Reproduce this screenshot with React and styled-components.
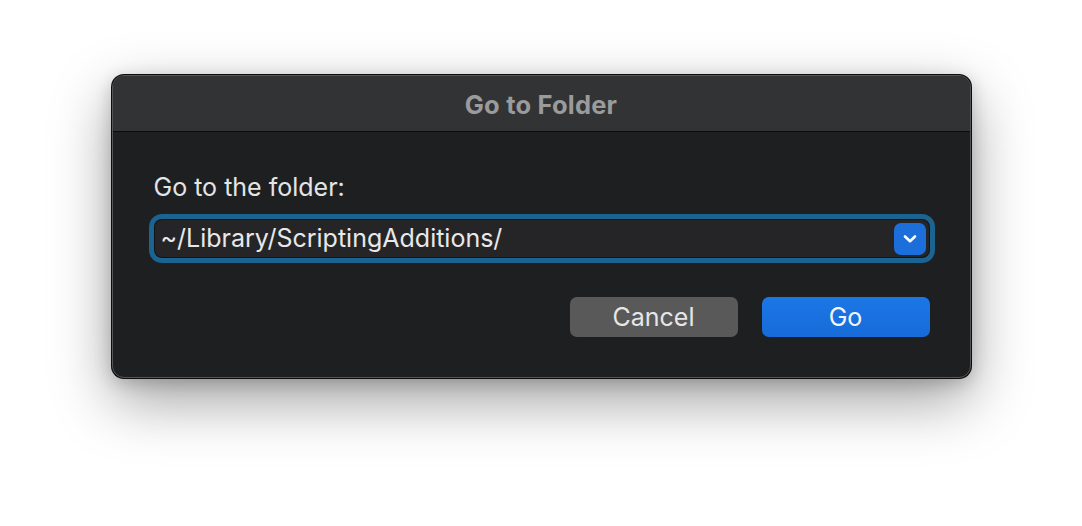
import React from "react";
import styled, { createGlobalStyle } from "styled-components";

const Global = createGlobalStyle`
  html, body { margin: 0; padding: 0; background: #ffffff; }
  body { font-family: Inter, "Noto Sans", "Liberation Sans", sans-serif; }
  * { box-sizing: border-box; }
`;

const Stage = styled.div`
  width: 1082px;
  height: 526px;
  display: flex;
  justify-content: center;
  align-items: flex-start;
  padding-top: 75px;
`;

const Window = styled.div`
  width: 859px;
  height: 303px;
  border-radius: 12px;
  background: #1e1f21;
  border: 1px solid #555658;
  box-shadow: 0 0 0 1px #0c0c0c, 0 22px 60px rgba(0, 0, 0, 0.38), 0 4px 18px rgba(0, 0, 0, 0.2);
  overflow: hidden;
  display: flex;
  flex-direction: column;
`;

const TitleBar = styled.div`
  height: 56px;
  flex: none;
  background: #323335;
  border-bottom: 1px solid #0b0b0c;
  display: flex;
  align-items: center;
  justify-content: center;
  color: #9b9b9c;
  font-weight: 700;
  font-size: 25.5px;
  letter-spacing: 0.2px;
  padding-top: 1px;
`;

const Body = styled.div`
  flex: 1;
  display: flex;
  flex-direction: column;
  padding: 40px 40px 0 41px;
`;

const Label = styled.div`
  color: #e4e4e5;
  font-size: 25px;
  line-height: 30px;
`;

const Field = styled.div`
  margin-top: 18px;
  height: 37px;
  border-radius: 7px;
  background: #252527;
  box-shadow: 0 0 0 1px #141416, 0 0 0 6px #1b6391;
  display: flex;
  align-items: center;
  padding: 0 3px 0 6px;
  margin-left: 1px;
  margin-right: 1px;
`;

const FieldText = styled.div`
  flex: 1;
  color: #e8e8e9;
  font-size: 25px;
  line-height: 37px;
  white-space: nowrap;
`;

const DropButton = styled.div`
  width: 32px;
  height: 32px;
  border-radius: 7px;
  background: #1c6fdb;
  display: flex;
  align-items: center;
  justify-content: center;
`;

const Buttons = styled.div`
  margin-top: 40px;
  display: flex;
  justify-content: flex-end;
  gap: 24px;
`;

const Button = styled.div`
  width: 168px;
  height: 40px;
  border-radius: 7px;
  display: flex;
  align-items: center;
  justify-content: center;
  font-size: 25px;
  color: ${(p) => (p.$primary ? "#f2f4f8" : "#e6e6e6")};
  background: ${(p) =>
    p.$primary ? "linear-gradient(#1b77e6, #176bd8)" : "#59595a"};
`;

export default function App() {
  return (
    <>
      <Global />
      <Stage>
        <Window>
          <TitleBar>Go to Folder</TitleBar>
          <Body>
            <Label>Go to the folder:</Label>
            <Field>
              <FieldText>~/Library/ScriptingAdditions/</FieldText>
              <DropButton>
                <svg width="16" height="10" viewBox="0 0 16 10">
                  <path
                    d="M3 2.5 L8 7.2 L13 2.5"
                    fill="none"
                    stroke="#ffffff"
                    strokeWidth="2.6"
                    strokeLinecap="round"
                    strokeLinejoin="round"
                  />
                </svg>
              </DropButton>
            </Field>
            <Buttons>
              <Button>Cancel</Button>
              <Button $primary>Go</Button>
            </Buttons>
          </Body>
        </Window>
      </Stage>
    </>
  );
}
